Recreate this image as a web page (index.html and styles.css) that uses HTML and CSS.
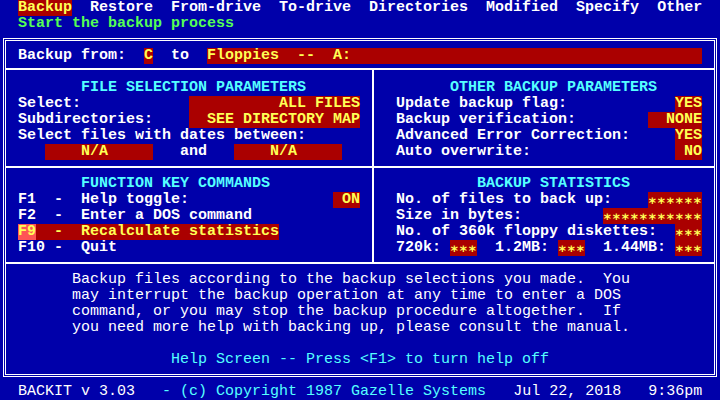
FILE: index.html
```html
<!DOCTYPE html>
<html lang="en">
<head>
    <meta charset="UTF-8">
    <meta name="viewport" content="width=device-width, initial-scale=1.0">
    <title>BACKIT v 3.03</title>
    <link rel="stylesheet" href="styles.css">
</head>
<body>
    <div class="screen">
        <div class="menu">
            <span class="item sel">Backup</span>
            <span class="item">Restore</span>
            <span class="item">From-drive</span>
            <span class="item">To-drive</span>
            <span class="item">Directories</span>
            <span class="item">Modified</span>
            <span class="item">Specify</span>
            <span class="item">Other</span>
        </div>
        <div class="hint">Start the backup process</div>

        <div class="box">
            <div class="row from">
                <span>Backup from:</span>
                <span class="fld">C</span>
                <span>to</span>
                <span class="fld grow">Floppies  --  A:</span>
            </div>

            <div class="sep sep-first"></div>

            <div class="panes panes-top">
                <div class="pane left">
                    <div class="title ind7">FILE SELECTION PARAMETERS</div>
                    <div class="row"><span>Select:</span><span class="fld">          ALL FILES</span></div>
                    <div class="row"><span>Subdirectories:</span><span class="fld">  SEE DIRECTORY MAP</span></div>
                    <div class="row"><span>Select files with dates between:</span></div>
                    <div class="row dates">
                        <span class="fld">    N/A     </span>
                        <span>and</span>
                        <span class="fld">    N/A     </span>
                    </div>
                </div>
                <div class="pane right">
                    <div class="title ind6">OTHER BACKUP PARAMETERS</div>
                    <div class="row"><span>Update backup flag:</span><span class="fld">YES</span></div>
                    <div class="row"><span>Backup verification:</span><span class="fld">  NONE</span></div>
                    <div class="row"><span>Advanced Error Correction:</span><span class="fld">YES</span></div>
                    <div class="row"><span>Auto overwrite:</span><span class="fld"> NO</span></div>
                </div>
            </div>

            <div class="sep"></div>

            <div class="panes panes-bottom">
                <div class="pane left">
                    <div class="title ind7">FUNCTION KEY COMMANDS</div>
                    <div class="row"><span>F1  -  Help toggle:</span><span class="fld"> ON</span></div>
                    <div class="row"><span>F2  -  Enter a DOS command</span></div>
                    <div class="row"><span class="hl"><span class="hk">F9</span>  -  Recalculate statistics</span></div>
                    <div class="row"><span>F10 -  Quit</span></div>
                </div>
                <div class="pane right">
                    <div class="title ind9">BACKUP STATISTICS</div>
                    <div class="row"><span>No. of files to back up:</span><span class="fld stars">∗∗∗∗∗∗</span></div>
                    <div class="row"><span>Size in bytes:</span><span class="fld stars">∗∗∗∗∗∗∗∗∗∗∗</span></div>
                    <div class="row"><span>No. of 360k floppy diskettes:</span><span class="fld stars">∗∗∗</span></div>
                    <div class="row"><span>720k: <span class="fld stars">∗∗∗</span>  1.2MB: <span class="fld stars">∗∗∗</span>  1.44MB:</span><span class="fld stars">∗∗∗</span></div>
                </div>
            </div>

            <div class="sep"></div>

            <div class="help">
                <div class="help-text">
                    <div>Backup files according to the backup selections you made.  You</div>
                    <div>may interrupt the backup operation at any time to enter a DOS</div>
                    <div>command, or you may stop the backup procedure altogether.  If</div>
                    <div>you need more help with backing up, please consult the manual.</div>
                    <div>&nbsp;</div>
                </div>
                <div class="help-note">Help Screen -- Press &lt;F1&gt; to turn help off</div>
            </div>
        </div>

        <div class="status"><span>BACKIT v 3.03</span>   <span class="cy">- (c) Copyright 1987 Gazelle Systems</span>   <span>Jul 22, 2018</span>   <span>9:36pm</span></div>
    </div>
</body>
</html>
```

FILE: styles.css
```css
* {
    box-sizing: border-box;
}

html, body {
    margin: 0;
    height: 100%;
}

body {
    background-color: #0000aa;
    color: #ffffff;
    font-family: 'Liberation Mono', 'DejaVu Sans Mono', monospace;
    font-size: 15px;
    font-weight: bold;
    line-height: 16px;
}

.screen {
    width: 720px;
    height: 400px;
    overflow: hidden;
}

/* top menu */

.menu {
    display: flex;
    gap: 18px;
    padding-left: 18px;
    height: 16px;
}

.item {
    white-space: pre;
}

.sel {
    background-color: #aa0000;
    color: #ffff55;
}

.hint {
    color: #55ff55;
    padding-left: 18px;
    height: 16px;
}

/* main box */

.box {
    margin: 6px 0 0 3px;
    width: 714px;
    border: 3px double #ffffff;
    padding: 7px 0 6px;
}

.row {
    display: flex;
    justify-content: space-between;
    height: 16px;
    white-space: pre;
}

.from {
    justify-content: flex-start;
    gap: 18px;
    padding: 0 12px;
}

.fld {
    display: inline-block;
    height: 16px;
    background-color: #aa0000;
    color: #ffff55;
    white-space: pre;
    text-align: right;
}

/* centred asterisks, like the VGA font */
.stars {
    font-family: 'DejaVu Sans Mono', monospace;
    font-size: 14px;
    letter-spacing: 0.57px;
    vertical-align: top;
}

.grow {
    flex: 1;
    text-align: left;
}

.sep {
    height: 2px;
    background-color: #ffffff;
}

.sep-first {
    margin-top: 4px;
}

.panes {
    display: flex;
}

.panes-top {
    padding: 10px 0 6px;
}

.panes-bottom {
    padding: 8px 0 6px;
}

.pane {
    display: flex;
    flex-direction: column;
}

.pane.left {
    width: 368px;
    padding: 0 12px;
    border-right: 2px solid #ffffff;
    margin: -10px 0 -6px;
    padding-top: 10px;
    padding-bottom: 6px;
}

.panes-bottom .pane.left {
    margin-top: -8px;
    padding-top: 8px;
}

.pane.right {
    flex: 1;
    padding: 0 12px 0 22px;
}

.title {
    color: #55ffff;
    height: 16px;
    white-space: pre;
}

.ind6 {
    padding-left: 54px;
}

.ind7 {
    padding-left: 63px;
}

.ind9 {
    padding-left: 81px;
}

.dates {
    justify-content: flex-start;
    gap: 27px;
    padding-left: 27px;
}

.hl {
    background-color: #aa0000;
    color: #ffff55;
}

.hk {
    display: inline-block;
    height: 16px;
    background-color: #ff5555;
}

/* help area */

.help {
    padding-top: 8px;
    font-weight: normal;
}

.help-text {
    padding-left: 66px;
}

.help-text div {
    height: 16px;
    white-space: pre;
}

.help-note {
    color: #55ffff;
    text-align: center;
    height: 16px;
}

/* status line */

.status {
    margin-top: 7px;
    padding-left: 18px;
    height: 16px;
    white-space: pre;
    font-weight: normal;
}

.cy {
    color: #55ffff;
}
```
